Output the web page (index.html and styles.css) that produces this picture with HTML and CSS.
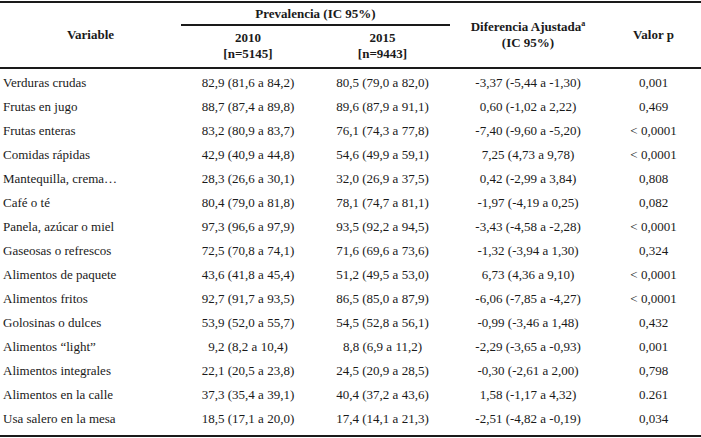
FILE: index.html
```html
<!DOCTYPE html>
<html lang="es">
<head>
<meta charset="utf-8">
<title>Prevalencia</title>
<link rel="stylesheet" href="styles.css">
</head>
<body>
<table class="tabla">
  <colgroup>
    <col class="c-var"><col class="c-y1"><col class="c-y2"><col class="c-dif"><col class="c-p">
  </colgroup>
  <thead>
    <tr class="h1">
      <th rowspan="2" class="hvar">Variable</th>
      <th colspan="2" class="hprev">Prevalencia (IC 95%)</th>
      <th rowspan="2" class="hdif">Diferencia Ajustada<sup>a</sup><br>(IC 95%)</th>
      <th rowspan="2" class="hp">Valor p</th>
    </tr>
    <tr class="h2">
      <th>2010<br>[n=5145]</th>
      <th>2015<br>[n=9443]</th>
    </tr>
  </thead>
  <tbody>
    <tr><td>Verduras crudas</td><td>82,9 (81,6 a 84,2)</td><td>80,5 (79,0 a 82,0)</td><td>-3,37 (-5,44 a -1,30)</td><td>0,001</td></tr>
    <tr><td>Frutas en jugo</td><td>88,7 (87,4 a 89,8)</td><td>89,6 (87,9 a 91,1)</td><td>0,60 (-1,02 a 2,22)</td><td>0,469</td></tr>
    <tr><td>Frutas enteras</td><td>83,2 (80,9 a 83,7)</td><td>76,1 (74,3 a 77,8)</td><td>-7,40 (-9,60 a -5,20)</td><td>&lt; 0,0001</td></tr>
    <tr><td>Comidas rápidas</td><td>42,9 (40,9 a 44,8)</td><td>54,6 (49,9 a 59,1)</td><td>7,25 (4,73 a 9,78)</td><td>&lt; 0,0001</td></tr>
    <tr><td>Mantequilla, crema…</td><td>28,3 (26,6 a 30,1)</td><td>32,0 (26,9 a 37,5)</td><td>0,42 (-2,99 a 3,84)</td><td>0,808</td></tr>
    <tr><td>Café o té</td><td>80,4 (79,0 a 81,8)</td><td>78,1 (74,7 a 81,1)</td><td>-1,97 (-4,19 a 0,25)</td><td>0,082</td></tr>
    <tr><td>Panela, azúcar o miel</td><td>97,3 (96,6 a 97,9)</td><td>93,5 (92,2 a 94,5)</td><td>-3,43 (-4,58 a -2,28)</td><td>&lt; 0,0001</td></tr>
    <tr><td>Gaseosas o refrescos</td><td>72,5 (70,8 a 74,1)</td><td>71,6 (69,6 a 73,6)</td><td>-1,32 (-3,94 a 1,30)</td><td>0,324</td></tr>
    <tr><td>Alimentos de paquete</td><td>43,6 (41,8 a 45,4)</td><td>51,2 (49,5 a 53,0)</td><td>6,73 (4,36 a 9,10)</td><td>&lt; 0,0001</td></tr>
    <tr><td>Alimentos fritos</td><td>92,7 (91,7 a 93,5)</td><td>86,5 (85,0 a 87,9)</td><td>-6,06 (-7,85 a -4,27)</td><td>&lt; 0,0001</td></tr>
    <tr><td>Golosinas o dulces</td><td>53,9 (52,0 a 55,7)</td><td>54,5 (52,8 a 56,1)</td><td>-0,99 (-3,46 a 1,48)</td><td>0,432</td></tr>
    <tr><td>Alimentos “light”</td><td>9,2 (8,2 a 10,4)</td><td>8,8 (6,9 a 11,2)</td><td>-2,29 (-3,65 a -0,93)</td><td>0,001</td></tr>
    <tr><td>Alimentos integrales</td><td>22,1 (20,5 a 23,8)</td><td>24,5 (20,9 a 28,5)</td><td>-0,30 (-2,61 a 2,00)</td><td>0,798</td></tr>
    <tr><td>Alimentos en la calle</td><td>37,3 (35,4 a 39,1)</td><td>40,4 (37,2 a 43,6)</td><td>1,58 (-1,17 a 4,32)</td><td>0.261</td></tr>
    <tr class="last"><td>Usa salero en la mesa</td><td>18,5 (17,1 a 20,0)</td><td>17,4 (14,1 a 21,3)</td><td>-2,51 (-4,82 a -0,19)</td><td>0,034</td></tr>
  </tbody>
</table>
</body>
</html>
```

FILE: styles.css
```css
html, body {
  margin: 0;
  padding: 0;
  background: #ffffff;
}

body {
  padding-top: 1px;
  font-family: "Liberation Serif", "Times New Roman", serif;
  font-size: 13px;
  color: #1a1a1a;
}

.tabla {
  width: 701px;
  border-collapse: collapse;
  table-layout: fixed;
  border-top: 2px solid #1a1a1a;
  border-bottom: 2px solid #1a1a1a;
}

.c-var { width: 181px; }
.c-y1 { width: 134px; }
.c-y2 { width: 135px; }
.c-dif { width: 156px; }
.c-p { width: 95px; }

.tabla th {
  font-weight: bold;
  text-align: center;
  vertical-align: middle;
  padding: 0;
  line-height: 16px;
}

.tabla thead {
  border-bottom: 2px solid #1a1a1a;
}

.h1 { height: 23px; }
.h1 .hprev {
  border-bottom: 2px solid #1a1a1a;
  padding-top: 1px;
}
.h2 { height: 43px; }
.h2 th { padding-bottom: 2px; }

.hvar { padding-top: 3px; }
.hp { padding-top: 4px; }
.hdif { padding-top: 6px; }

.tabla sup {
  font-size: 8px;
  line-height: 0;
  vertical-align: 5px;
}

.tabla td {
  height: 24px;
  padding: 0;
  line-height: 24px;
  text-align: center;
  white-space: nowrap;
}

.tabla td:first-child {
  text-align: left;
  padding-left: 3px;
}

.tabla tbody tr:first-child td { padding-top: 2px; }
.tabla tr.last td { padding-bottom: 4px; }
```
